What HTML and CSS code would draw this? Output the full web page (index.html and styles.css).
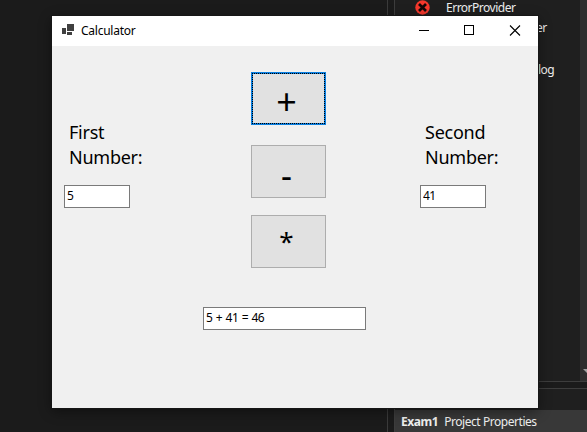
FILE: index.html
```html
<!DOCTYPE html>
<html lang="en">
<head>
<meta charset="utf-8">
<title>Calculator</title>
<link rel="stylesheet" href="styles.css">
</head>
<body>
<div class="ide">
  <div class="editor"></div>
  <div class="side">
    <div class="toolbox">
      <ul class="tools">
        <li class="tool">
          <svg class="error-icon" width="15" height="15" viewBox="0 0 15 15"><circle cx="7.5" cy="7.5" r="7.2" fill="#f5382c"/><path d="M4 4l7 7M11 4l-7 7" stroke="#140707" stroke-width="2.7"/></svg>
          <span>ErrorProvider</span>
        </li>
        <li class="tool tool-watcher"><span>er</span></li>
        <li class="tool"></li>
        <li class="tool tool-dialog"><span>log</span></li>
      </ul>
      <div class="scrollbar"><svg width="7" height="5" viewBox="0 0 7 5"><path d="M3 1h8L7 5z" fill="#a0a0a0"/></svg></div>
    </div>
    <div class="properties">
      <div class="object"><b>Exam1</b><span>Project Properties</span></div>
    </div>
  </div>
</div>
<main class="window">
  <header class="titlebar">
    <svg class="app-icon" width="12" height="11" viewBox="0 0 12 11" fill="#404040" shape-rendering="crispEdges"><path d="M0 4h4v6H0zM5 0h7v7H5zM5 8h5v3H5z"/></svg>
    <h1 class="title">Calculator</h1>
    <svg class="controls" width="138" height="30" viewBox="0 0 138 30" fill="none" stroke="#000"><path d="M19 14.5h10M64.500 9.500h9v9h-9z" shape-rendering="crispEdges"/><path d="M110 9.500l10 10M120 9.500l-10 10" stroke-width="1.1"/></svg>
  </header>
  <form class="form">
    <div class="operand">
      <label class="label" for="first">First<br>Number:</label>
      <input class="field" id="first" value="5">
    </div>
    <div class="operators">
      <button class="operator focused" type="button"><span class="plus">+</span></button>
      <button class="operator" type="button"><span class="minus">-</span></button>
      <button class="operator" type="button"><span class="times">*</span></button>
    </div>
    <div class="operand">
      <label class="label" for="second">Second<br>Number:</label>
      <input class="field" id="second" value="41">
    </div>
    <input class="field result" value="5 + 41 = 46">
  </form>
</main>
</body>
</html>
```
FILE: styles.css
```css
* { box-sizing: border-box; }
body {
  margin: 0;
  width: 587px;
  height: 432px;
  overflow: hidden;
  background: #1b1b1b;
  font: 12px/16px "Noto Sans", "Open Sans", sans-serif;
}
.ide { display: flex; height: 432px; color: #efefef; }
.editor { width: 388px; border-right: 1px solid #3b3b3b; }
.side {
  flex: 1;
  display: flex;
  flex-direction: column;
  gap: 6px;
  padding-left: 6px;
}
.toolbox {
  height: 382px;
  display: flex;
  background: #1f1f1f;
  border: solid #3d3d3d;
  border-width: 0 0 1px 1px;
}
.tools { flex: 1; margin: 0; padding: 0; list-style: none; }
.tool { display: flex; align-items: center; height: 21px; margin-left: 19px; }
.tool:first-child { height: 17px; padding-bottom: 2px; line-height: 14px; }
.tool span { letter-spacing: -0.5px; }
.tool:first-child span { padding-top: 1px; }
.error-icon { margin: 0 16.5px 0 0.5px; }
.tool-watcher { padding: 1px 0 0 122px; }
.tool-dialog { padding: 1px 0 0 124px; }
.scrollbar {
  width: 7px;
  display: flex;
  align-items: flex-end;
  padding-bottom: 8px;
  background: #2e2e2e;
}
.properties {
  flex: 1;
  padding-top: 21px;
  background: #1f1f1f;
  border: solid #3d3d3d;
  border-width: 1px 0 0 1px;
}
.object {
  display: flex;
  gap: 6px;
  height: 22px;
  padding: 4px 6px;
  background: #383838;
  letter-spacing: -0.45px;
}
.window {
  position: absolute;
  left: 52px;
  top: 16px;
  width: 486px;
  height: 392px;
  background: #f0f0f0;
  box-shadow: 0 0 0 1px #161616, 0 3px 12px rgba(0, 0, 0, .45);
}
.titlebar {
  display: flex;
  align-items: center;
  height: 30px;
  padding-left: 10px;
  background: #fff;
}
.app-icon { margin-top: -3px; }
.title {
  flex: 1;
  margin: 0 0 0 7px;
  font-size: 12px;
  font-weight: 400;
  letter-spacing: -0.25px;
}
.form {
  display: grid;
  grid-template-columns: 187px 169px 1fr;
  padding: 26px 0 0 12px;
}
.operand { padding-top: 48px; }
.label {
  display: block;
  height: 65px;
  padding-left: 5px;
  font-size: 18px;
  line-height: 25px;
  letter-spacing: -0.25px;
}
.field {
  display: block;
  width: 66px;
  height: 23px;
  margin: 0;
  padding: 0 2px 2px;
  border: 1px solid #7a7a7a;
  border-radius: 0;
  outline: 0;
  background: #fff;
  color: #000;
  font: 12px "Noto Sans", "Open Sans", sans-serif;
  letter-spacing: -0.5px;
  word-spacing: 0.8px;
}
.operators {
  display: grid;
  grid-template-rows: 53px 53px 53px;
  row-gap: 17px;
  width: 75px;
}
.operator {
  display: flex;
  align-items: center;
  justify-content: center;
  padding: 0;
  border: 1px solid #adadad;
  border-radius: 0;
  background: #e1e1e1;
  color: #000;
  font: 29px/40px "Noto Sans", "Open Sans", sans-serif;
}
.operator:not(.focused) { margin: 3px 0 -3px; }
.focused {
  border: 2px solid #0a7fe0;
  outline: 1px dotted #000;
  outline-offset: -2px;
}
.plus, .minus, .times { padding-right: 4px; }
.plus { padding-top: 7px; font-size: 36px; }
.minus { padding-top: 6px; font-size: 34px; }
.times { padding-bottom: 1px; font-size: 26px; }
.result {
  grid-column: 1 / -1;
  width: 163px;
  margin: 42px 0 0 139px;
}
```
